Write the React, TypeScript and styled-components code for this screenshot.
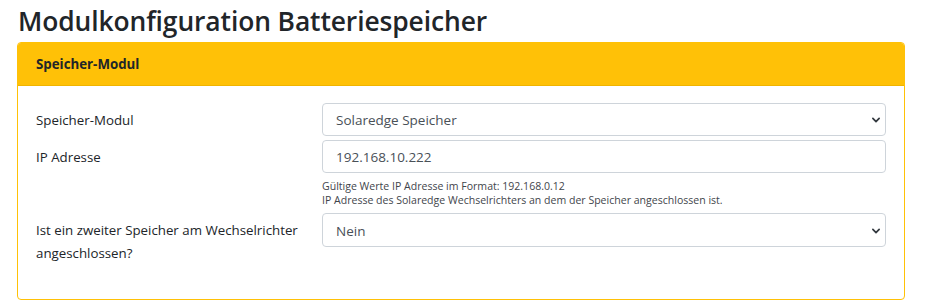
import React from 'react'
import styled, { createGlobalStyle } from 'styled-components'

const GlobalStyle = createGlobalStyle`
  html, body {
    margin: 0;
    padding: 0;
    background: #fff;
  }
  body {
    font-family: 'Open Sans', 'Noto Sans', sans-serif;
    color: #212529;
  }
`

const Page = styled.div`
  width: 929px;
  height: 308px;
  padding: 0 24px 0 17px;
  box-sizing: border-box;
  overflow: hidden;
`

const Title = styled.h1`
  margin: 0;
  padding: 3px 0 0 1px;
  height: 39px;
  font-size: 26.4px;
  font-weight: 600;
  line-height: 36px;
  color: #212529;
  letter-spacing: -0.1px;
`

const Card = styled.div`
  border: 1px solid #ffc107;
  border-radius: 4px;
  background: #fff;
  overflow: hidden;
`

const CardHeader = styled.div`
  height: 42px;
  display: flex;
  align-items: center;
  padding: 0 18px;
  background: #ffc107;
  border-bottom: 1px solid #f0b400;
  font-size: 13.3px;
  font-weight: 700;
  color: #212529;
`

const CardBody = styled.div`
  padding: 17px 18px 34px;
`

const FormRow = styled.div<{ gap?: number }>`
  display: grid;
  grid-template-columns: 286px 1fr;
  margin-bottom: ${({ gap }) => (gap ?? 0) + 'px'};
`

const Label = styled.label`
  padding-top: 6px;
  font-size: 13.3px;
  line-height: 23px;
  color: #212529;
`

const Control = styled.div`
  display: flex;
  flex-direction: column;
`

const fieldBase = `
  height: 33px;
  box-sizing: border-box;
  border: 1px solid #ced4da;
  border-radius: 4px;
  background: #fff;
  padding: 1px 13px 0;
  font-family: 'Open Sans', 'Noto Sans', sans-serif;
  font-size: 13.5px;
  color: #495057;
  display: flex;
  align-items: center;
`

const SelectBox = styled.div<{ tall?: boolean }>`
  ${fieldBase}
  height: ${({ tall }) => (tall ? '34px' : '33px')};
  justify-content: space-between;
  padding-right: 4px;
`

const InputBox = styled.div`
  ${fieldBase}
`

const Chevron = styled.svg`
  width: 10px;
  height: 10px;
  flex: none;
`

const Help = styled.div`
  margin-top: 6px;
  font-size: 10.55px;
  line-height: 14px;
  color: #3f454b;
`

function Select({ value, tall }: { value: string; tall?: boolean }) {
  return (
    <SelectBox tall={tall}>
      <span>{value}</span>
      <Chevron viewBox="0 0 16 16">
        <path d="M3 5.5 L8 10.5 L13 5.5" fill="none" stroke="#343a40" strokeWidth="2.8" strokeLinecap="round" strokeLinejoin="round" />
      </Chevron>
    </SelectBox>
  )
}

export default function App() {
  return (
    <>
      <GlobalStyle />
      <Page>
        <Title>Modulkonfiguration Batteriespeicher</Title>
        <Card>
          <CardHeader>Speicher-Modul</CardHeader>
          <CardBody>
            <FormRow gap={4}>
              <Label>Speicher-Modul</Label>
              <Control>
                <Select value="Solaredge Speicher" />
              </Control>
            </FormRow>
            <FormRow gap={6}>
              <Label>IP Adresse</Label>
              <Control>
                <InputBox>192.168.10.222</InputBox>
                <Help>
                  Gültige Werte IP Adresse im Format: 192.168.0.12
                  <br />
                  IP Adresse des Solaredge Wechselrichters an dem der Speicher angeschlossen ist.
                </Help>
              </Control>
            </FormRow>
            <FormRow>
              <Label>
                Ist ein zweiter Speicher am Wechselrichter
                <br />
                angeschlossen?
              </Label>
              <Control>
                <Select value="Nein" tall />
              </Control>
            </FormRow>
          </CardBody>
        </Card>
      </Page>
    </>
  )
}
